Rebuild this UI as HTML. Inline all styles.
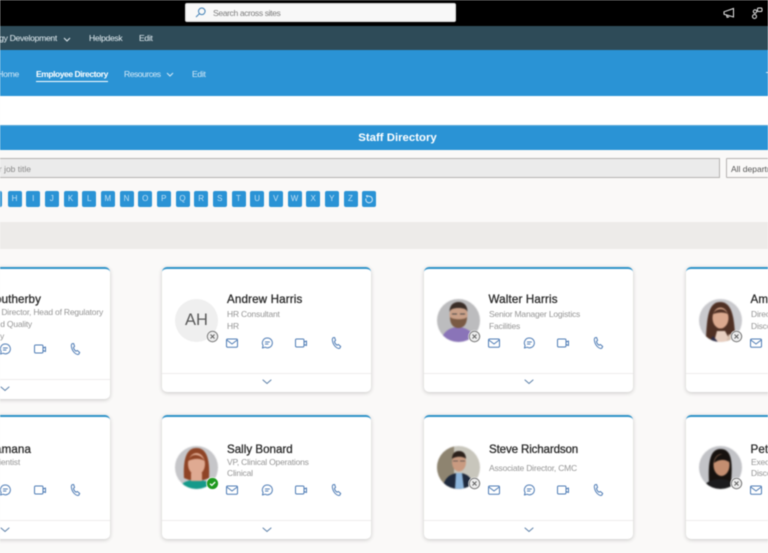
<!DOCTYPE html>
<html><head><meta charset="utf-8"><title>Staff Directory</title>
<style>
*{box-sizing:border-box}
html,body{margin:0;padding:0;width:768px;height:553px;overflow:hidden;background:#faf9f8}
body{font-family:"Liberation Sans",sans-serif;position:relative}
#w{position:absolute;left:0;top:0;width:768px;height:553px;overflow:hidden;filter:blur(.4px);background:#faf9f8}
.a{position:absolute;white-space:nowrap}
.n{font-size:8.6px;color:#e4eef3;line-height:12px;letter-spacing:-.3px}
.l{position:absolute;top:191px;width:14px;height:16px;background:#2a93d5;border-radius:2px;color:#c4e1f4;font-size:8px;line-height:16px;text-align:center}
.card{position:absolute;width:209px;background:#fff;border-top:2px solid #2f93c9;border-radius:5px;box-shadow:0 1px 4px rgba(0,0,0,.2)}
.f{position:absolute;left:0;right:0;height:1px;background:#eeeded}
.name{position:absolute;font-size:11.6px;line-height:14px;color:#2b2b2b;white-space:nowrap;letter-spacing:.15px;-webkit-text-stroke:.3px #2b2b2b}
.t{position:absolute;font-size:8.5px;line-height:11px;color:#969696;white-space:nowrap;letter-spacing:-.2px}
.ic{position:absolute;width:14px;height:14px;fill:none;stroke:#4f7cb5;stroke-width:1;stroke-linecap:round;stroke-linejoin:round}
.av{position:absolute;width:43px;height:43px;border-radius:50%;overflow:hidden}
svg.av{filter:blur(.6px)}
.st{position:absolute;width:13px;height:13px}
</style></head>
<body><div id="w">
<svg width="0" height="0" style="position:absolute">
<symbol id="mail" viewBox="0 0 14 14"><rect x="1.5" y="3" width="11" height="8.2" rx="1.2"/><path d="M1.8 4 7 8 12.2 4"/></symbol>
<symbol id="chat" viewBox="0 0 14 14"><path d="M7.4 2a4.9 4.9 0 1 1-2.3 9.2L2.4 12l.7-2.5A4.9 4.9 0 0 1 7.4 2z"/><path d="M5.4 6h4M5.4 8h2.6"/></symbol>
<symbol id="vid" viewBox="0 0 14 14"><rect x="1.5" y="3" width="8.5" height="8" rx="1.2"/><path d="M10 6 12.5 5v4.500l-2.500-1"/></symbol>
<symbol id="ph" viewBox="0 0 14 14"><path d="M4 1.8 5.6 1.5 6.6 4.4 5.4 5.500C5.800 7 6.800 8.400 8 9.200l1.400-.7 2.300 2-.8 1.500c-.6.6-1.800.5-2.700 0C5.600 10.500 3.800 7.500 3.300 4.200 3.200 3.200 3.400 2.300 4 1.800z"/></symbol>
<symbol id="chev" viewBox="0 0 10 6"><path d="M1 1 5 4.500 9 1" fill="none" stroke="#5b7fa8" stroke-width="1" stroke-linecap="round"/></symbol>
<symbol id="off" viewBox="0 0 13 13"><circle cx="6.500" cy="6.500" r="6.300" fill="#fff"/><circle cx="6.500" cy="6.500" r="5.200" fill="#efefef" stroke="#777" stroke-width="1"/><path d="M4.500 4.500l4 4M8.500 4.500l-4 4" stroke="#666" stroke-width="1.100" fill="none"/></symbol>
<symbol id="on" viewBox="0 0 13 13"><circle cx="6.500" cy="6.500" r="6.300" fill="#fff"/><circle cx="6.500" cy="6.500" r="5.600" fill="#1f9a1f"/><path d="M4 6.700l1.800 1.700L9.200 5" stroke="#fff" stroke-width="1.300" fill="none"/></symbol>
</svg>

<!-- header bars -->
<div class="a" style="left:0;top:0;width:768px;height:26px;background:#000"></div>
<div class="a" style="left:0;top:26px;width:768px;height:24px;background:#2e4b58"></div>
<div class="a" style="left:0;top:50px;width:768px;height:46px;background:#2a93d5"></div>
<div class="a" style="left:0;top:96px;width:768px;height:29px;background:#fff"></div>
<div class="a" style="left:0;top:125px;width:768px;height:25px;background:#2a93d5;border-top:1px solid #5aa8d8"></div>

<!-- search -->
<div class="a" style="left:185px;top:3px;width:271px;height:19px;background:#f8f8f8;border-radius:2px;border:1px solid #ddd"></div>
<svg class="a" style="left:195px;top:7px" width="11" height="11" viewBox="0 0 11 11" fill="none" stroke="#3f7fb5" stroke-width="1"><circle cx="6.800" cy="4.300" r="3.300"/><path d="M4.300 6.800 1 10"/></svg>
<div class="a" style="left:213px;top:7px;font-size:8.6px;line-height:12px;color:#7d7d7d;letter-spacing:-.4px">Search across sites</div>
<!-- top right -->
<svg class="a" style="left:723px;top:7px" width="12" height="12" viewBox="0 0 12 12" fill="none" stroke="#e8e8e8" stroke-width="1"><path d="M1 4.800 10.500 1.500V10L1 7.200zM3.500 8l.6 2.300 2-.4"/></svg>
<svg class="a" style="left:751px;top:7px" width="12" height="12" viewBox="0 0 12 12" fill="none" stroke="#e8e8e8" stroke-width="1"><circle cx="4" cy="4.500" r="1.700"/><circle cx="3.500" cy="9.500" r="2"/><rect x="6.500" y="1" width="4.500" height="3.500" rx="1"/></svg>

<!-- nav 1 -->
<div class="a n" style="right:711px;top:32px">ogy Development</div>
<svg class="a" style="left:63px;top:37px" width="8" height="5" viewBox="0 0 8 5"><path d="M1 1 4 4 7 1" fill="none" stroke="#dfe9ee" stroke-width="1"/></svg>
<div class="a n" style="left:89px;top:32px">Helpdesk</div>
<div class="a n" style="left:139px;top:32px">Edit</div>

<!-- nav 2 -->
<div class="a n" style="right:749px;top:68px;color:#d5e9f6">Home</div>
<div class="a n" style="left:36px;top:68px;color:#fff;font-weight:bold;font-size:8.5px;letter-spacing:-.44px">Employee Directory</div>
<div class="a" style="left:36px;top:81px;width:72px;height:1px;background:#fff"></div>
<div class="a n" style="left:124px;top:68px;color:#d5e9f6;letter-spacing:-.5px">Resources</div>
<svg class="a" style="left:166px;top:72px" width="8" height="5" viewBox="0 0 8 5"><path d="M1 1 4 4 7 1" fill="none" stroke="#d5e9f6" stroke-width="1"/></svg>
<div class="a n" style="left:192px;top:68px;color:#d5e9f6">Edit</div>
<div class="a" style="left:766px;top:71.500px;width:2px;height:1.500px;background:#cfe8f8"></div>

<!-- title -->
<div class="a" style="left:300px;width:195px;top:131px;text-align:center;color:#fff;font-weight:bold;font-size:11.4px;line-height:14px">Staff Directory</div>

<!-- search inputs -->
<div class="a" style="left:-2px;top:158px;width:722px;height:20px;background:#ebebeb;border:1px solid #b5b3b1"></div>
<div class="a" style="right:737px;top:163px;font-size:8.5px;line-height:12px;color:#8a8a8a">r job title</div>
<div class="a" style="left:726px;top:158px;width:60px;height:20px;background:#faf9f8;border:1px solid #b5b3b1;border-radius:1px"></div>
<div class="a" style="left:731px;top:163px;font-size:8.5px;line-height:12px;color:#555">All departments</div>

<!-- letters -->
<div class="l" style="left:-12px">G</div>
<div class="l" style="left:7.5px">H</div>
<div class="l" style="left:26.2px">I</div>
<div class="l" style="left:44.8px">J</div>
<div class="l" style="left:63.5px">K</div>
<div class="l" style="left:82.2px">L</div>
<div class="l" style="left:100.8px">M</div>
<div class="l" style="left:119.5px">N</div>
<div class="l" style="left:138.2px">O</div>
<div class="l" style="left:156.8px">P</div>
<div class="l" style="left:175.5px">Q</div>
<div class="l" style="left:194.2px">R</div>
<div class="l" style="left:212.8px">S</div>
<div class="l" style="left:231.5px">T</div>
<div class="l" style="left:250.2px">U</div>
<div class="l" style="left:268.8px">V</div>
<div class="l" style="left:287.5px">W</div>
<div class="l" style="left:306.2px">X</div>
<div class="l" style="left:324.8px">Y</div>
<div class="l" style="left:343.5px">Z</div>
<div class="l" style="left:362.2px"></div>
<svg class="a" style="left:364px;top:194px" width="10" height="10" viewBox="0 0 10 10" fill="none" stroke="#d3e9f7" stroke-width="1"><path d="M2.200 1.500 5 2.200a3.300 3.300 0 1 1-3 2.200M2.200 1.500 3.500 3.500"/></svg>

<!-- grey band -->
<div class="a" style="left:0;top:222px;width:768px;height:27px;background:#edebe9"></div>

<!-- ROW 1 -->
<div class="card" style="left:-99px;top:267px;height:132px"><div class="f" style="top:110px"></div></div>
<div class="name" style="right:727px;top:293px;letter-spacing:.1px">Southerby</div>
<div class="t" style="right:665px;top:307px">Associate Director, Head of Regulatory</div>
<div class="t" style="right:736px;top:319px">and Quality</div>
<div class="t" style="right:764px;top:331px">y</div>
<svg class="ic" style="left:-2px;top:342px"><use href="#chat"/></svg>
<svg class="ic" style="left:33px;top:342px"><use href="#vid"/></svg>
<svg class="ic" style="left:68px;top:342px"><use href="#ph"/></svg>
<svg class="a" style="left:0;top:386px" width="10" height="6"><use href="#chev"/></svg>

<div class="card" style="left:162px;top:267px;height:125px"><div class="f" style="top:104px"></div></div>
<div class="av" style="left:175px;top:299px;background:#efefef;color:#5a5a5a;font-size:16.5px;line-height:43px;text-align:center">AH</div>
<svg class="st" style="left:205.5px;top:329.5px"><use href="#off"/></svg>
<div class="name" style="left:227px;top:293px">Andrew Harris</div>
<div class="t" style="left:227px;top:309px">HR Consultant</div>
<div class="t" style="left:227px;top:321px">HR</div>
<svg class="ic" style="left:225px;top:336px"><use href="#mail"/></svg>
<svg class="ic" style="left:260px;top:336px"><use href="#chat"/></svg>
<svg class="ic" style="left:294px;top:336px"><use href="#vid"/></svg>
<svg class="ic" style="left:329px;top:336px"><use href="#ph"/></svg>
<svg class="a" style="left:262px;top:379px" width="10" height="6"><use href="#chev"/></svg>

<div class="card" style="left:424px;top:267px;height:125px"><div class="f" style="top:104px"></div></div>
<svg class="av" style="left:437px;top:299px" viewBox="0 0 43 43"><rect width="43" height="43" fill="#bcbcbe"/><path d="M4 43c1-10 9-15 17-15s16 5 18 15z" fill="#8a74b8"/><ellipse cx="21.500" cy="16" rx="9" ry="11" fill="#c9a088"/><path d="M12.500 13c0-7 4-10 9-10s9 3 9 10c-1-3-4-4-9-4s-8 1-9 4z" fill="#3a2e28"/><path d="M13 18c0 8 4 11 8.500 11s8.500-3 8.500-11c-2 3-14 3-17 0z" fill="#7a5a44"/><path d="M15 15h5M23 15h5" stroke="#444" stroke-width="1"/></svg>
<svg class="st" style="left:467.5px;top:329.5px"><use href="#off"/></svg>
<div class="name" style="left:488.5px;top:293px">Walter Harris</div>
<div class="t" style="left:489px;top:309px">Senior Manager Logistics</div>
<div class="t" style="left:489px;top:321px">Facilities</div>
<svg class="ic" style="left:487px;top:336px"><use href="#mail"/></svg>
<svg class="ic" style="left:522px;top:336px"><use href="#chat"/></svg>
<svg class="ic" style="left:556px;top:336px"><use href="#vid"/></svg>
<svg class="ic" style="left:591px;top:336px"><use href="#ph"/></svg>
<svg class="a" style="left:524px;top:379px" width="10" height="6"><use href="#chev"/></svg>

<div class="card" style="left:686px;top:267px;height:125px"><div class="f" style="top:104px"></div></div>
<svg class="av" style="left:699px;top:299px" viewBox="0 0 43 43"><rect width="43" height="43" fill="#c9c9cd"/><path d="M7 38C8 20 9 3 21 3s14 15 15 33l-6 6H13z" fill="#4f3024"/><path d="M15 43l3-11h8l6 11z" fill="#e8cfc0"/><path d="M10 43l4-6 5 6z" fill="#2c2c44"/><path d="M27 43l3-8 8 3 2 5z" fill="#d9c0ae"/><ellipse cx="21.500" cy="19" rx="8" ry="10.500" fill="#dba98f"/><path d="M14 15c3-6 11-7 15 0-4-2-9-2-15 0z" fill="#4f3024"/></svg>
<svg class="st" style="left:729.5px;top:329.5px"><use href="#off"/></svg>
<div class="name" style="left:750.5px;top:293px">Amanda</div>
<div class="t" style="left:751px;top:309px">Director</div>
<div class="t" style="left:751px;top:321px">Discovery</div>
<svg class="ic" style="left:749px;top:336px"><use href="#mail"/></svg>

<!-- ROW 2 -->
<div class="card" style="left:-99px;top:415px;height:124px"><div class="f" style="top:103px"></div></div>
<div class="name" style="right:737px;top:443px;letter-spacing:.1px">Ramana</div>
<div class="t" style="right:748px;top:457px">Scientist</div>
<svg class="ic" style="left:-2px;top:483px"><use href="#chat"/></svg>
<svg class="ic" style="left:33px;top:483px"><use href="#vid"/></svg>
<svg class="ic" style="left:68px;top:483px"><use href="#ph"/></svg>
<svg class="a" style="left:0;top:527px" width="10" height="6"><use href="#chev"/></svg>

<div class="card" style="left:162px;top:415px;height:124px"><div class="f" style="top:103px"></div></div>
<svg class="av" style="left:175px;top:446px" viewBox="0 0 43 43"><rect width="43" height="43" fill="#c6c6c9"/><path d="M9 32C8 14 11 2 21.500 2S35 14 34 32l-5 2H14z" fill="#8f4426"/><path d="M4 43c2-7 9-9 17-9s16 2 18 9z" fill="#159a8a"/><ellipse cx="21.500" cy="18" rx="8.500" ry="11" fill="#dfaa92"/><path d="M16 27h11v8H16z" fill="#dfaa92"/><path d="M13 15c2-7 11-9 17 0-5-3-11-3-17 0z" fill="#8f4426"/></svg>
<svg class="st" style="left:205.5px;top:476.5px"><use href="#on"/></svg>
<div class="name" style="left:227px;top:443px;letter-spacing:0">Sally Bonard</div>
<div class="t" style="left:227px;top:457px">VP, Clinical Operations</div>
<div class="t" style="left:227px;top:468px">Clinical</div>
<svg class="ic" style="left:225px;top:483px"><use href="#mail"/></svg>
<svg class="ic" style="left:260px;top:483px"><use href="#chat"/></svg>
<svg class="ic" style="left:294px;top:483px"><use href="#vid"/></svg>
<svg class="ic" style="left:329px;top:483px"><use href="#ph"/></svg>
<svg class="a" style="left:262px;top:527px" width="10" height="6"><use href="#chev"/></svg>

<div class="card" style="left:424px;top:415px;height:124px"><div class="f" style="top:103px"></div></div>
<svg class="av" style="left:437px;top:446px" viewBox="0 0 43 43"><rect width="43" height="43" fill="#c8c6bc"/><rect width="17" height="43" fill="#8e8470"/><path d="M6 43c0-10 7-16 16-16s14 6 15 16z" fill="#1f2a3d"/><path d="M18 43l1-16h6l2 16z" fill="#8eb6dc"/><ellipse cx="22" cy="16" rx="7" ry="9.500" fill="#c99a80"/><path d="M15 13c0-6 3.500-8 7-8s7 2 7 8c-2-3-11-3-14 0z" fill="#2c211b"/><path d="M16 15h5M23 15h5" stroke="#444" stroke-width=".8"/></svg>
<svg class="st" style="left:467.5px;top:476.5px"><use href="#off"/></svg>
<div class="name" style="left:489px;top:443px;letter-spacing:-.15px">Steve Richardson</div>
<div class="t" style="left:489px;top:463px">Associate Director, CMC</div>
<svg class="ic" style="left:487px;top:483px"><use href="#mail"/></svg>
<svg class="ic" style="left:522px;top:483px"><use href="#chat"/></svg>
<svg class="ic" style="left:556px;top:483px"><use href="#vid"/></svg>
<svg class="ic" style="left:591px;top:483px"><use href="#ph"/></svg>
<svg class="a" style="left:524px;top:527px" width="10" height="6"><use href="#chev"/></svg>

<div class="card" style="left:686px;top:415px;height:124px"><div class="f" style="top:103px"></div></div>
<svg class="av" style="left:699px;top:446px" viewBox="0 0 43 43"><rect width="43" height="43" fill="#c2c3c7"/><path d="M10 36C9 16 11 3 21.500 3S34 14 32 36z" fill="#17120f"/><path d="M3 43c3-7 10-10 18-10s15 3 18 10z" fill="#1c1c1e"/><ellipse cx="22.500" cy="19" rx="8" ry="11" fill="#c48e70"/><path d="M15 17c1-6 5-9 9-9 3 0 6 3 6 8-4-3-10-3-15 1z" fill="#17120f"/></svg>
<svg class="st" style="left:729.5px;top:476.5px"><use href="#off"/></svg>
<div class="name" style="left:750.5px;top:443px">Petra</div>
<div class="t" style="left:751px;top:457px">Executive</div>
<div class="t" style="left:751px;top:468px">Discovery</div>
<svg class="ic" style="left:749px;top:483px"><use href="#mail"/></svg>
</div></body></html>
